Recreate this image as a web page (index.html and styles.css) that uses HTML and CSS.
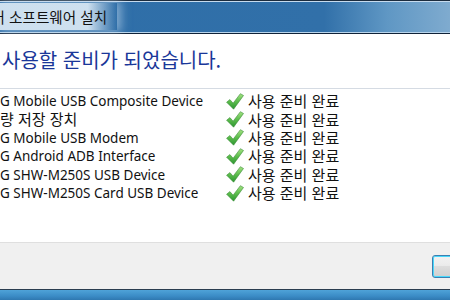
FILE: index.html
```html
<!DOCTYPE html>
<html lang="ko">

<head>
    <meta charset="UTF-8">
    <meta name="viewport" content="width=device-width, initial-scale=1.0">
    <title>드라이버 소프트웨어 설치</title>
    <link rel="stylesheet" href="styles.css">
</head>

<body>
    <div class="window">
        <div class="titlebar">
            <span class="title-glow"><span class="cut">버</span> 소프트웨어 설치</span>
        </div>

        <div class="content">
            <h1 class="heading">사용할 준비가 되었습니다.</h1>

            <div class="device-list">
                <div class="device-row">
                    <span class="device-name">G Mobile USB Composite Device</span>
                    <span class="device-status"><svg class="check" viewBox="0 0 18 17"><use href="#check"/></svg>사용 준비 완료</span>
                </div>
                <div class="device-row">
                    <span class="device-name ko">량 저장 장치</span>
                    <span class="device-status"><svg class="check" viewBox="0 0 18 17"><use href="#check"/></svg>사용 준비 완료</span>
                </div>
                <div class="device-row">
                    <span class="device-name">G Mobile USB Modem</span>
                    <span class="device-status"><svg class="check" viewBox="0 0 18 17"><use href="#check"/></svg>사용 준비 완료</span>
                </div>
                <div class="device-row">
                    <span class="device-name">G Android ADB Interface</span>
                    <span class="device-status"><svg class="check" viewBox="0 0 18 17"><use href="#check"/></svg>사용 준비 완료</span>
                </div>
                <div class="device-row">
                    <span class="device-name">G SHW-M250S USB Device</span>
                    <span class="device-status"><svg class="check" viewBox="0 0 18 17"><use href="#check"/></svg>사용 준비 완료</span>
                </div>
                <div class="device-row">
                    <span class="device-name">G SHW-M250S Card USB Device</span>
                    <span class="device-status"><svg class="check" viewBox="0 0 18 17"><use href="#check"/></svg>사용 준비 완료</span>
                </div>
            </div>
        </div>

        <div class="footer">
            <button class="close-button">닫기</button>
        </div>

        <div class="frame-bottom"></div>
    </div>

    <svg width="0" height="0" class="defs">
        <defs>
            <linearGradient id="checkFill" x1="0" y1="0" x2="0" y2="1">
                <stop offset="0" stop-color="#a4e383" />
                <stop offset="0.5" stop-color="#5cbd4c" />
                <stop offset="1" stop-color="#2c9431" />
            </linearGradient>
            <symbol id="check" viewBox="0 0 18 17">
                <path d="M0.6 9.2 L3.9 6.6 L7.1 10.2 L14.4 0.7 L17.5 2.5 L7.6 16.2 Z" fill="url(#checkFill)" stroke="#3a8c38" stroke-width="0.6" stroke-linejoin="round" />
            </symbol>
        </defs>
    </svg>
</body>

</html>
```

FILE: styles.css
```css
body {
    margin: 0;
    padding: 0;
    width: 450px;
    height: 300px;
    overflow: hidden;
    font-family: 'Noto Sans', 'Noto Sans CJK KR', sans-serif;
    background-color: #ffffff;
}

.window {
    display: flex;
    flex-direction: column;
    height: 300px;
}

.titlebar {
    height: 31px;
    border-top: 1px solid #1c2c3e;
    border-bottom: 1px solid #b9d5ec;
    box-shadow: 0 1px 0 #102238, inset 0 1px 0 #c6dbee;
    background: linear-gradient(to right, #2e6ea8 0%, #3170a9 72%, #5f97c4 86%, #7fabcf 100%);
    display: flex;
    align-items: center;
    margin-bottom: 1px;
}

.title-glow {
    font-family: 'Noto Sans CJK KR', sans-serif;
    font-size: 14.6px;
    color: #111;
    padding: 3px 10px 3px 0;
    background: linear-gradient(to right, rgba(214, 230, 243, 0.95) 75%, rgba(214, 230, 243, 0));
    box-shadow: 2px 0 9px 2px rgba(200, 222, 240, 0.55);
}

.cut {
    display: inline-block;
    width: 5px;
    overflow: hidden;
    direction: rtl;
    vertical-align: bottom;
}

.content {
    flex: 1;
    background-color: #ffffff;
    border-bottom: 1px solid #dfdfdf;
}

.heading {
    margin: 13px 0 0 2px;
    font-family: 'Noto Sans CJK KR', sans-serif;
    font-size: 20px;
    font-weight: normal;
    line-height: 26px;
    color: #1a3799;
}

.device-list {
    margin-top: 15px;
    border-top: 1px solid #d5dbe3;
    padding-top: 3px;
}

.device-row {
    display: flex;
    height: 18.4px;
    line-height: 18px;
    font-size: 13.5px;
    color: #111;
}

.device-name {
    width: 226px;
    white-space: nowrap;
}

.ko {
    font-family: 'Noto Sans CJK KR', sans-serif;
    font-size: 15px;
}

.device-status {
    display: flex;
    align-items: center;
    gap: 4px;
    font-family: 'Noto Sans CJK KR', sans-serif;
    font-size: 15px;
}

.check {
    width: 18px;
    height: 17px;
}

.defs {
    position: absolute;
}

.footer {
    height: 46px;
    background-color: #f0f0f0;
    display: flex;
    justify-content: flex-end;
    align-items: flex-start;
    padding-top: 12px;
    box-sizing: border-box;
}

.close-button {
    width: 75px;
    height: 23px;
    margin-right: -57px;
    border: 1px solid #3c7fb1;
    border-radius: 3px;
    background: linear-gradient(to bottom, #f2f2f2 0%, #ebebeb 45%, #dddddd 50%, #cfcfcf 100%);
    box-shadow: inset 0 0 0 1px #48d8fb;
    font-family: 'Noto Sans CJK KR', sans-serif;
    font-size: 12px;
    color: #111;
}

.frame-bottom {
    height: 10px;
    border-top: 1px solid #2a3d50;
    background: linear-gradient(to bottom, #4fa3d8 0%, #3b8cc6 60%, #2f78b0 100%);
}
```
